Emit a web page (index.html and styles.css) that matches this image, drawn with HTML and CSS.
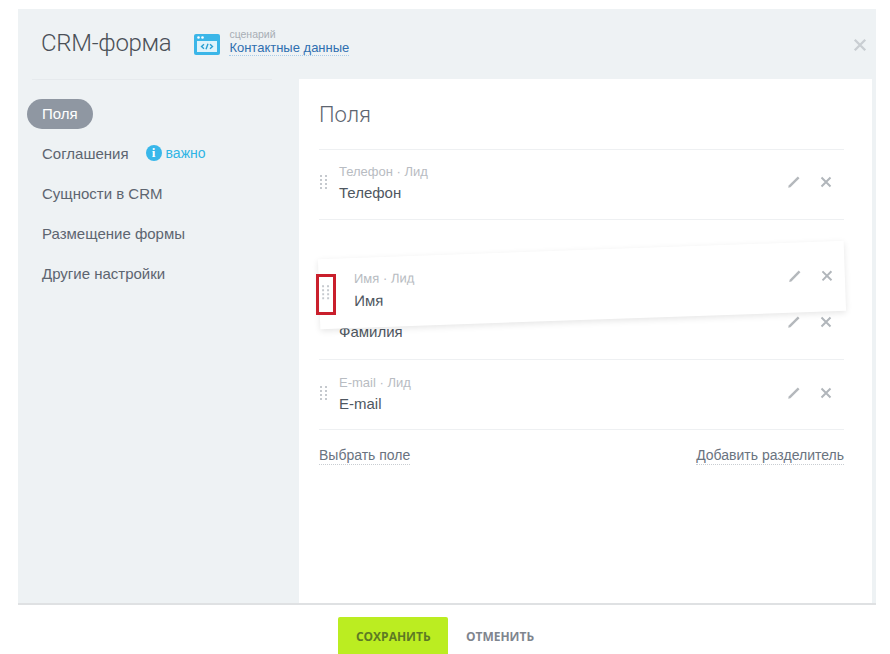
FILE: index.html
```html
<!DOCTYPE html>
<html lang="ru">
<head>
<meta charset="utf-8">
<title>CRM-форма</title>
<link rel="stylesheet" href="styles.css">
</head>
<body>
<svg class="defs" width="0" height="0" aria-hidden="true">
  <symbol id="pencil" viewBox="0 0 14 14"><path d="M1.200 12.800l.5-2.200L10.800 1.500l1.700 1.700-9.100 9.100z" fill="currentColor"/></symbol>
  <symbol id="cross" viewBox="0 0 12 12"><path d="M1.500 1.500l9 9M10.500 1.500l-9 9" stroke="currentColor" stroke-width="2" fill="none"/></symbol>
  <symbol id="grip" viewBox="0 0 8 16"><g fill="currentColor"><rect x="0" y="1" width="2" height="2"/><rect x="5" y="1" width="2" height="2"/><rect x="0" y="5" width="2" height="2"/><rect x="5" y="5" width="2" height="2"/><rect x="0" y="9" width="2" height="2"/><rect x="5" y="9" width="2" height="2"/><rect x="0" y="13" width="2" height="2"/><rect x="5" y="13" width="2" height="2"/></g></symbol>
</svg>
<div class="slider">
  <header class="head">
    <h1 class="title">CRM-форма</h1>
    <svg class="scenario-icon" width="26" height="21" viewBox="0 0 26 21">
      <rect width="26" height="21" rx="2" fill="#3bb6e8"/>
      <rect x="3" y="7" width="20" height="11" fill="#dff3fb"/>
      <circle cx="4.500" cy="3.500" r="1.300" fill="#fff"/><circle cx="8.500" cy="3.500" r="1.300" fill="#fff"/>
      <path d="M10 10.200l-2.500 2.300 2.500 2.300M16 10.200l2.500 2.300-2.500 2.300M14 9.800l-2 5.400" stroke="#2a9fd3" stroke-width="1.400" fill="none"/>
    </svg>
    <div class="scenario">
      <span class="scenario-label">сценарий</span>
      <a class="scenario-link">Контактные данные</a>
    </div>
    <svg class="close"><use href="#cross"/></svg>
  </header>
  <div class="main">
    <nav class="nav">
      <a class="nav-item active">Поля</a>
      <a class="nav-item">Соглашения
        <span class="hint"><span class="hint-dot">i</span>важно</span>
      </a>
      <a class="nav-item">Сущности в CRM</a>
      <a class="nav-item">Размещение формы</a>
      <a class="nav-item">Другие настройки</a>
    </nav>
    <section class="content">
      <h2 class="content-title">Поля</h2>
      <div class="rows">
        <div class="row">
          <svg class="grip"><use href="#grip"/></svg>
          <div class="text"><span class="caption">Телефон · Лид</span><span class="name">Телефон</span></div>
          <svg class="pencil"><use href="#pencil"/></svg>
          <svg class="cross"><use href="#cross"/></svg>
        </div>
        <div class="row placeholder"></div>
        <div class="row surname">
          <div class="text"><span class="caption">Фамилия · Лид</span><span class="name">Фамилия</span></div>
          <svg class="pencil"><use href="#pencil"/></svg>
          <svg class="cross"><use href="#cross"/></svg>
        </div>
        <div class="row email">
          <svg class="grip"><use href="#grip"/></svg>
          <div class="text"><span class="caption">E-mail · Лид</span><span class="name">E-mail</span></div>
          <svg class="pencil"><use href="#pencil"/></svg>
          <svg class="cross"><use href="#cross"/></svg>
        </div>
      </div>
      <div class="links">
        <a class="link">Выбрать поле</a>
        <a class="link">Добавить разделитель</a>
      </div>
      <div class="drag">
        <div class="drag-row">
          <svg class="grip"><use href="#grip"/></svg>
          <div class="text"><span class="caption">Имя · Лид</span><span class="name">Имя</span></div>
          <svg class="pencil"><use href="#pencil"/></svg>
          <svg class="cross"><use href="#cross"/></svg>
        </div>
      </div>
      <div class="marker"></div>
    </section>
  </div>
</div>
<footer class="foot">
  <button class="btn save">Сохранить</button>
  <button class="btn cancel">Отменить</button>
</footer>
</body>
</html>
```

FILE: styles.css
```css
* { box-sizing: border-box; }
html, body { margin: 0; height: 100%; }
body {
  width: 890px;
  height: 654px;
  overflow: hidden;
  background: #fff;
  padding-top: 9px;
  font-family: "Liberation Sans", Arial, sans-serif;
  color: #525c69;
  display: flex;
  flex-direction: column;
}
.defs { position: absolute; }
.slider {
  width: 858px;
  height: 594px;
  margin-left: 18px;
  background: #eef2f4;
  display: flex;
  flex-direction: column;
  flex: none;
}
.head {
  height: 70px;
  display: flex;
  align-items: center;
  padding-left: 23px;
  flex: none;
}
.title {
  margin: -2px 0 0;
  font: 300 24px Roboto, sans-serif;
  color: #4a5057;
  letter-spacing: -0.3px;
}
.scenario-icon { margin-left: 23px; flex: none; margin-top: 1px; }
.scenario { margin-left: 9px; display: flex; flex-direction: column; margin-top: -3px; }
.scenario-label { font-size: 10.500px; line-height: 11px; color: #a8aeb5; }
.scenario-link {
  font-size: 13px;
  line-height: 15px;
  color: #2f6fb0;
  border-bottom: 1px dotted #a9cbe8;
}
.close { width: 14px; height: 14px; margin-left: auto; margin-right: 9px; margin-top: 2px; color: #c9ced2; }
.main { flex: 1; display: flex; min-height: 0; }
.nav {
  width: 281px;
  padding: 20px 0 0 9px;
  display: flex;
  flex-direction: column;
  align-items: flex-start;
  gap: 10px;
  position: relative;
  flex: none;
}
.nav::before {
  content: "";
  position: absolute;
  left: 14px;
  top: 0;
  width: 240px;
  height: 1px;
  background: #e6eaed;
}
.nav-item {
  height: 30px;
  padding: 0 15px;
  border-radius: 15px;
  font-size: 15px;
  line-height: 30px;
  color: #5d6570;
  white-space: nowrap;
  display: flex;
  align-items: center;
}
.nav-item.active { background: #8f97a2; color: #fff; }
.hint { margin-left: 17px; display: inline-flex; align-items: center; font-size: 14px; color: #2fb5e5; margin-top: -2px; }
.hint-dot {
  width: 16px;
  height: 16px;
  border-radius: 50%;
  background: #38b7ea;
  color: #fff;
  font: bold 13px/16px "Liberation Serif", serif;
  text-align: center;
  margin-right: 4px;
}
.content {
  width: 573px;
  background: #fff;
  padding: 0 28px 0 20px;
  position: relative;
  flex: none;
}
.content-title {
  margin: 0;
  height: 70px;
  font: 300 22px/72px Roboto, sans-serif;
  color: #5d6570;
}
.rows { display: flex; flex-direction: column; border-bottom: 1px solid #eef0f2; }
.row {
  height: 70px;
  border-top: 1px solid #eef0f2;
  display: flex;
  align-items: center;
  position: relative;
}
.row.email { padding-top: 2px; }
.row.surname .caption { visibility: hidden; }
.grip { width: 8px; height: 16px; color: #c5c9ce; margin-left: 1px; margin-bottom: 6px; flex: none; }
.text { margin-left: 11px; display: flex; flex-direction: column; gap: 5px; margin-top: -2px; flex: 1; }
.row.surname .text { margin-left: 20px; margin-top: -4px; }
.caption { font-size: 13px; line-height: 14px; color: #b8bcc2; }
.name { font-size: 15px; line-height: 18px; color: #4f5761; }
.pencil { width: 14px; height: 14px; color: #b4b8bc; margin-right: 19px; margin-bottom: 6px; flex: none; }
.cross { width: 12px; height: 12px; color: #b1b6bb; margin-right: 12px; margin-bottom: 6px; flex: none; }
.links { display: flex; justify-content: space-between; margin-top: 17px; }
.link { font-size: 14px; line-height: 17px; color: #6a737f; border-bottom: 1px dotted #c9cdd2; }
.drag {
  position: absolute;
  left: 20px;
  top: 171px;
  width: 526px;
  height: 70px;
}
.drag::before {
  content: "";
  position: absolute;
  inset: 0;
  background: #fff;
  box-shadow: 0 2px 6px rgba(0, 0, 0, 0.10);
  transform: rotate(-2deg);
}
.drag-row {
  position: relative;
  height: 70px;
  display: flex;
  align-items: center;
  padding-left: 1px;
  transform: translateY(-4px) rotate(-0.5deg);
}
.drag-row .text { margin-left: 36px; margin-top: 15px; gap: 6px; }
.drag-row .grip { margin-left: 2px; margin-right: -12px; margin-bottom: 0; margin-top: 18px; }
.marker {
  position: absolute;
  left: 17px;
  top: 195px;
  width: 20px;
  height: 41px;
  border: 3px solid #c91f2c;
}
.foot {
  flex: 1;
  display: flex;
  justify-content: center;
  padding-top: 14px;
  position: relative;
}
.foot::before {
  content: "";
  position: absolute;
  left: 18px;
  top: 0;
  width: 858px;
  height: 2px;
  background: #dfe1e3;
}
.btn {
  border: 0;
  padding: 0 18px;
  height: 38px;
  background: none;
  font: bold 12px "Open Sans", sans-serif;
  text-transform: uppercase;
  border-radius: 2px 2px 0 0;
}
.save { background: #bbed21; color: #5d7a24; width: 110px; }
.cancel { color: #7f858e; }
```
